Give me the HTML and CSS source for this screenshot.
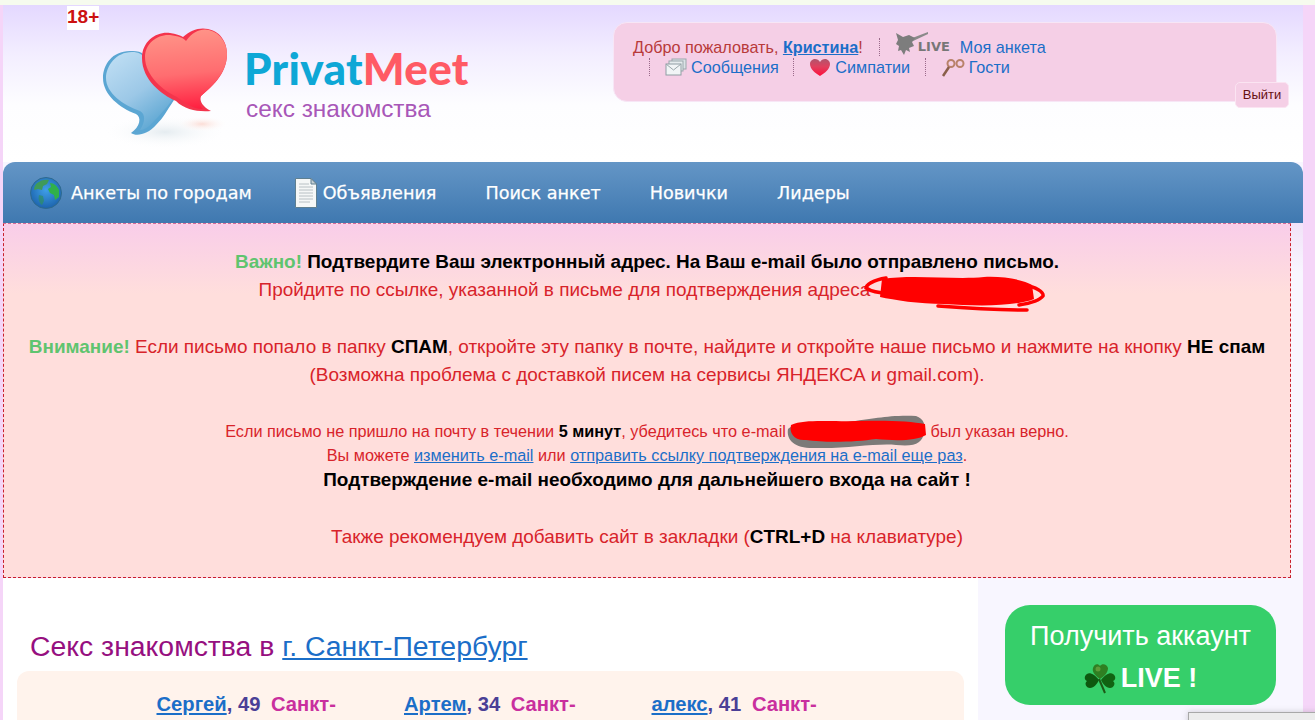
FILE: index.html
```html
<!DOCTYPE html>
<html lang="ru">
<head>
<meta charset="utf-8">
<title>PrivatMeet</title>
<link rel="stylesheet" href="styles.css">
</head>
<body>
<div class="strip"></div>
<div class="page">
  <header class="header">
    <span class="age">18+</span>
    <div class="brand">
      <svg class="hearts" width="150" height="130" viewBox="0 0 150 130">
        <defs>
          <linearGradient id="gb" x1="0.1" y1="0" x2="0.7" y2="1"><stop offset="0" stop-color="#c0dff4"/><stop offset="0.55" stop-color="#9cc8e7"/><stop offset="1" stop-color="#5ca6d2"/></linearGradient>
          <linearGradient id="gr" x1="0.5" y1="0" x2="0.6" y2="1"><stop offset="0" stop-color="#ff9488"/><stop offset="0.55" stop-color="#ff6d70"/><stop offset="1" stop-color="#ff1f40"/></linearGradient>
          <radialGradient id="gs"><stop offset="0" stop-color="#d4e0e6" stop-opacity="0.6"/><stop offset="1" stop-color="#ffffff" stop-opacity="0"/></radialGradient>
          <radialGradient id="gp"><stop offset="0" stop-color="#fbd5cc" stop-opacity="0.8"/><stop offset="1" stop-color="#ffffff" stop-opacity="0"/></radialGradient>
        </defs>
        <ellipse cx="75" cy="112" rx="62" ry="17" fill="url(#gs)"/>
        <ellipse cx="112" cy="104" rx="26" ry="8" fill="url(#gp)"/>
        <path d="M40 31C22 31 13 45 13 58C13 75 30 88 46 94C52 97 50 107 41 113C47 117 58 114 66 105C74 97 76 92 84 80L52 33C48 31 44 31 40 31Z" fill="#5ba6d3"/>
        <path d="M42 32C26 32 16 46 16 58C16 73 33 85 50 91C56 94 55 103 50 110C57 110 62 103 68 97C74 90 78 86 82 80L52 35C48 32 45 32 42 32Z" fill="url(#gb)"/>
        <path d="M52 38C52 20 68 11 80 13C86 14 90 15 93 17C100 10 110 7 118 9C132 12 137 24 137 34C137 55 120 68 111 76C109 81 113 87 121 91C108 92 95 90 86 81C72 75 52 60 52 38Z" fill="#f4344c"/>
        <path d="M55 37C55 23 68 14 80 15C88 16 94 18 96 21C103 11 112 8 119 10C131 13 137 24 137 34C137 54 120 68 111 76C108 80 109 85 113 89C101 89 93 81 87 77C74 71 55 56 55 37Z" fill="url(#gr)"/>
      </svg>
      <div class="brand-text">
        <div class="wordmark"><span class="w-blue">Privat</span><span class="w-red">Meet</span></div>
        <div class="tagline">секс знакомства</div>
      </div>
    </div>
    <div class="panel">
      <div class="panel-row">
        <span class="welcome">Добро пожаловать, <a href="#" class="name">Кристина</a>!</span>
        <span class="item item-live">
          <svg class="leaf" width="34" height="24" viewBox="0 0 34 24"><path d="M12 8L33 0L33 2L16 10Z" fill="#8a8a8a"/><path d="M1 1L8 5L14 3L20 6L17 10L19 14L14 16L15 20L11 18L9 23L6 18L3 19L4 14L1 12L3 8Z" fill="#7d7d7d"/></svg>
          <span class="live">LIVE</span><a href="#">Моя анкета</a>
        </span>
      </div>
      <div class="panel-row panel-row-2">
        <span class="item">
          <svg width="22" height="18" viewBox="0 0 22 18"><rect x="7" y="1" width="14" height="10" fill="#dbe3e6" stroke="#9aa7ab"/><rect x="4" y="3" width="14" height="10" fill="#e6ecee" stroke="#9aa7ab"/><rect x="1" y="6" width="15" height="11" fill="#f1f5f6" stroke="#8f9ea3"/><path d="M1 6L8.500 12L16 6" fill="none" stroke="#9aa7ab"/></svg>
          <a href="#">Сообщения</a>
        </span>
        <span class="item">
          <svg width="22" height="19" viewBox="0 0 22 19"><defs><linearGradient id="gh" x1="0" y1="0" x2="0" y2="1"><stop offset="0" stop-color="#b0556c"/><stop offset="0.45" stop-color="#e0405e"/><stop offset="1" stop-color="#ff0f3c"/></linearGradient></defs><path d="M11 18C6 15 1 11 1 6C1 2.500 4 1 6 1C8 1 10 2 11 4C12 2 14 1 16 1C18 1 21 2.500 21 6C21 11 16 15 11 18Z" fill="url(#gh)"/></svg>
          <a href="#">Симпатии</a>
        </span>
        <span class="item">
          <svg width="24" height="19" viewBox="0 0 24 19"><circle cx="10" cy="5.500" r="3.500" fill="none" stroke="#b9826a" stroke-width="2"/><circle cx="19" cy="5.500" r="3.500" fill="none" stroke="#b9826a" stroke-width="2"/><path d="M8 9L2 18" stroke="#8a5f4a" stroke-width="2.500"/></svg>
          <a href="#">Гости</a>
        </span>
      </div>
      <a href="#" class="logout">Выйти</a>
    </div>
  </header>

  <nav class="nav">
    <a href="#" class="nav-item nav-first">
      <svg width="32" height="32" viewBox="0 0 32 32"><defs><radialGradient id="gg" cx="0.5" cy="0.4" r="0.65"><stop offset="0" stop-color="#3f9fe8"/><stop offset="1" stop-color="#1a5fa8"/></radialGradient></defs><circle cx="16" cy="16" r="15.500" fill="url(#gg)" stroke="#2f6a8e"/><path d="M7 6C11 3 15 2 19 3L17 7L13 9L12 13L8 12L4 13C4 10 5 8 7 6Z" fill="#3f9a5a"/><path d="M20 6C24 6 27 9 29 13L29 20L25 23L24 18L20 16L18 12L21 10Z" fill="#30b04a"/><path d="M9 18L13 19L14 24L12 28C9 26 8 22 9 18Z" fill="#2d8f62" opacity="0.7"/></svg>
      <span>Анкеты по городам</span>
    </a>
    <a href="#" class="nav-item nav-doc">
      <svg width="22" height="30" viewBox="0 0 22 30"><path d="M0.500 0.500H16L21.500 6V29.500H0.500Z" fill="#f5f7f7" stroke="#5f7f90"/><path d="M16 0.500V6H21.500Z" fill="#c5cfd3" stroke="#5f7f90"/><path d="M4 6H14M4 9H18M4 12H18M4 15H18M4 18H18M4 21H18M4 24H15" stroke="#b8c0c4"/></svg>
      <span>Объявления</span>
    </a>
    <a href="#" class="nav-item">Поиск анкет</a>
    <a href="#" class="nav-item">Новички</a>
    <a href="#" class="nav-item">Лидеры</a>
  </nav>

  <div class="alert-wrap">
  <section class="alert">
    <p class="line"><b class="green">Важно!</b> <b class="dark">Подтвердите Ваш электронный адрес. На Ваш e-mail было отправлено письмо.</b></p>
    <p class="line">Пройдите по ссылке, указанной в письме для подтверждения адреса <span class="redact redact-a"><svg width="182" height="38" viewBox="0 0 182 38"><path d="M18 5C50 0 90 6 120 3C140 2 160 6 168 11L170 25C150 33 110 32 80 30C55 30 30 26 16 23Z" fill="#ff0000"/><path d="M22 4C9 6 2 11 2 14C8 18 16 19 24 19M160 11C172 13 180 18 179 22C176 26 168 29 155 31M74 32C100 34 140 36 163 36" fill="none" stroke="#ff0000" stroke-width="3.500" stroke-linecap="round"/></svg></span></p>
    <p class="line">&nbsp;</p>
    <p class="line"><b class="green">Внимание!</b> Если письмо попало в папку <b class="dark">СПАМ</b>, откройте эту папку в почте, найдите и откройте наше письмо и нажмите на кнопку <b class="dark">НЕ</b> <b class="dark">спам</b></p>
    <p class="line">(Возможна проблема с доставкой писем на сервисы ЯНДЕКСА и gmail.com).</p>
    <p class="blank-a">&nbsp;</p>
    <p class="line line-sm">Если письмо не пришло на почту в течении <b class="dark">5 минут</b>, убедитесь что e-mail<span class="redact redact-b"><svg width="142" height="34" viewBox="0 0 142 34"><path d="M2 14C8 8 30 8 60 7C90 4 100 0 130 1C138 4 140 10 138 18C136 28 130 32 110 30C90 28 60 34 30 33C10 34 0 26 2 14Z" fill="#7c7a78"/><path d="M5 10C20 4 40 7 70 6C100 5 125 6 139 9L140 20C130 26 110 26 90 24C70 27 40 28 20 25C8 26 3 18 5 10Z" fill="#ff0000"/></svg></span> был указан верно.</p>
    <p class="line line-sm">Вы можете <a href="#">изменить e-mail</a> или <a href="#">отправить ссылку подтверждения на e-mail еще раз</a>.</p>
    <p class="line line-b"><b class="dark">Подтверждение e-mail необходимо для дальнейшего входа на сайт !</b></p>
    <p class="blank-b">&nbsp;</p>
    <p class="line">Также рекомендуем добавить сайт в закладки (<b class="dark">CTRL+D</b> на клавиатуре)</p>
  </section>
  </div>

  <main class="main">
    <div class="content">
      <h1 class="title">Секс знакомства в <a href="#">г. Санкт-Петербург</a></h1>
      <div class="cards">
        <div class="person"><a href="#">Сергей</a><span class="age-n">, 49</span> <span class="city">Санкт-Петербург</span></div>
        <div class="person"><a href="#">Артем</a><span class="age-n">, 34</span> <span class="city">Санкт-Петербург</span></div>
        <div class="person"><a href="#">алекс</a><span class="age-n">, 41</span> <span class="city">Санкт-Петербург</span></div>
      </div>
    </div>
    <aside class="side">
      <a href="#" class="cta">
        <span class="cta-top">Получить аккаунт</span>
        <span class="cta-live">
          <svg width="32" height="31" viewBox="0 0 32 31"><path d="M15 16L21 30" stroke="#1d5a16" stroke-width="2"/><path d="M16 16C10 12 8 8 9 5C10 1 14 0 16 3C18 0 23 1 24 5C24 9 21 13 16 16Z" fill="#2f7f22"/><path d="M15 17C11 12 6 9 3 11C0 13 0 17 3 18C0 20 2 25 6 25C10 25 13 21 15 17Z" fill="#0d590f"/><path d="M17 17C21 12 26 9 29 11C32 13 32 17 29 18C32 20 30 25 26 25C22 25 19 21 17 17Z" fill="#116312"/><circle cx="14" cy="6" r="2.500" fill="#5f9a3a"/></svg>
          <b>LIVE !</b>
        </span>
      </a>
    </aside>
  </main>
</div>
<div class="recaptcha"></div>
</body>
</html>
```

FILE: styles.css
```css
html, body {
  margin: 0;
  height: 720px;
  overflow: hidden;
}
body {
  background: #f5d5f8;
  font-family: "Liberation Sans", Arial, sans-serif;
  position: relative;
}
p, h1 { margin: 0; }
a { color: #1b6ec8; }

.strip { height: 5px; background: #f6fbee; }
.page { margin: 0 12px 0 3px; background: #f8f6ff; }

.header {
  height: 157px;
  position: relative;
  display: flex;
  align-items: flex-start;
  background: linear-gradient(#e4d8ff 0, #f3eeff 50px, #fdfdff 100px, #ffffff 157px);
}
.age {
  position: absolute;
  left: 64px;
  top: 1px;
  width: 32px;
  height: 24px;
  background: #fff;
  color: #cc1111;
  font-weight: bold;
  font-size: 19px;
  line-height: 22px;
  text-align: center;
}
.brand {
  display: flex;
  width: 610px;
  margin-top: 15px;
  padding-left: 87px;
  box-sizing: border-box;
}
.hearts { flex: none; margin-right: -2px; }
.brand-text { margin-left: 6px; margin-top: 18px; }
.wordmark {
  font-family: Lato, "Open Sans", sans-serif;
  font-weight: 900;
  font-size: 44px;
  line-height: 60px;
  letter-spacing: 0.3px;
}
.w-blue { color: #0ea7d6; }
.w-red { color: #ff5a64; }
.tagline {
  font-size: 24.4px;
  line-height: 26px;
  color: #a857b8;
  margin: -2px 0 0 2px;
}

.panel {
  position: relative;
  width: 664px;
  height: 80px;
  box-sizing: border-box;
  margin-top: 17px;
  padding: 14px 19px 0;
  background: #f5cfe6;
  border: 1px solid #f7e6f6;
  border-radius: 14px;
  color: #b83a3a;
  font-size: 16.2px;
  line-height: 20px;
}
.panel-row { display: flex; align-items: center; height: 20px; }
.panel-row-2 { padding-left: 16px; }
.panel a { text-decoration: none; }
.panel .name { font-weight: bold; text-decoration: underline; }
.item {
  display: inline-flex;
  align-items: center;
  gap: 4px;
  margin-right: 14.5px;
  padding-left: 15px;
  border-left: 1px dotted #9a6a8a;
  height: 18px;
}
.welcome { margin-right: 16px; white-space: nowrap; }
.leaf { margin-top: -7px; }
.live {
  font-family: "DejaVu Sans", sans-serif;
  font-weight: bold;
  font-size: 13px;
  color: #777;
  margin: 0 6px 0 -15px;
}
.panel .logout {
  position: absolute;
  right: -13px;
  bottom: -7px;
  width: 54px;
  height: 26px;
  background: #f5cfe6;
  border: 1px solid #fbe4f2;
  border-radius: 5px;
  box-sizing: border-box;
  color: #661111;
  font-size: 13px;
  line-height: 24px;
  text-align: center;
}

.nav {
  height: 61px;
  display: flex;
  align-items: center;
  gap: 49px;
  padding-left: 27px;
  border-radius: 12px 12px 0 0;
  background: linear-gradient(#6496c6, #3f78b0);
}
.nav-item {
  display: flex;
  align-items: center;
  color: #fff;
  text-decoration: none;
  font-family: "DejaVu Sans", sans-serif;
  font-size: 17.6px;
  -webkit-text-stroke: 0.25px #fff;
  white-space: nowrap;
}
.nav-first svg { margin-right: 9px; }
.nav-doc { margin-left: -6px; }
.nav-doc svg { margin-right: 6px; }

.alert-wrap {
  background: linear-gradient(#f1e2f8 0, #f8f6ff 50px);
}
.alert {
  width: 1288px;
  height: 355px;
  box-sizing: border-box;
  padding-top: 24px;
  border: 1px dashed #c8202c;
  border-top-color: #d66a9a;
  background: linear-gradient(#f9cde9 0, #ffdedc 70px);
  color: #d8232a;
  text-align: center;
  font-size: 18.95px;
}
.line { line-height: 28.2px; white-space: nowrap; }
.line-sm { font-size: 16.25px; line-height: 24.5px; }
.line-b { line-height: 24.5px; }
.blank-a { line-height: 29.7px; }
.blank-b { line-height: 31px; }
.green { color: #5fc46f; }
.dark { color: #000; }
.redact { display: inline-block; position: relative; height: 1px; vertical-align: baseline; }
.redact svg { position: absolute; display: block; }
.redact-a { width: 160px; }
.redact-a svg { left: -11px; top: -21px; }
.redact-b { width: 140px; }
.redact-b svg { left: 0; top: -21px; }

.main { display: flex; height: 142px; }
.content {
  width: 975px;
  box-sizing: border-box;
  background: #fff;
  padding: 49px 14px 0;
}
.title {
  font-size: 28.4px;
  font-weight: normal;
  line-height: 38px;
  color: #960f80;
  margin: 0 0 6px 13px;
  white-space: nowrap;
}
.cards {
  display: grid;
  grid-template-columns: repeat(3, 190px);
  column-gap: 57.5px;
  height: 200px;
  box-sizing: border-box;
  padding: 20px 0 0 139.5px;
  background: #fff3ec;
  border-radius: 12px;
}
.person {
  font-size: 20.2px;
  font-weight: bold;
  line-height: 26px;
}
.age-n { color: #4a3f96; margin-right: 5px; }
.city { color: #c92f9e; }
.side {
  flex: 1;
  background: #f8f6ff;
  padding: 27px 0 0 27px;
}
.cta {
  display: flex;
  flex-direction: column;
  align-items: center;
  width: 271px;
  height: 100px;
  padding-top: 12px;
  box-sizing: border-box;
  border-radius: 25px;
  background: #36cf6a;
  color: #fff;
  font-size: 27px;
  text-decoration: none;
}
.cta-top { line-height: 38px; }
.cta-live { display: flex; align-items: center; gap: 5px; line-height: 40px; margin-top: 3px; }

.recaptcha {
  position: absolute;
  left: 1188px;
  top: 712px;
  width: 140px;
  height: 20px;
  background: #ececec;
  border: 1px solid #a8a8a8;
  box-shadow: 0 0 6px rgba(120, 120, 120, 0.35);
}
```
